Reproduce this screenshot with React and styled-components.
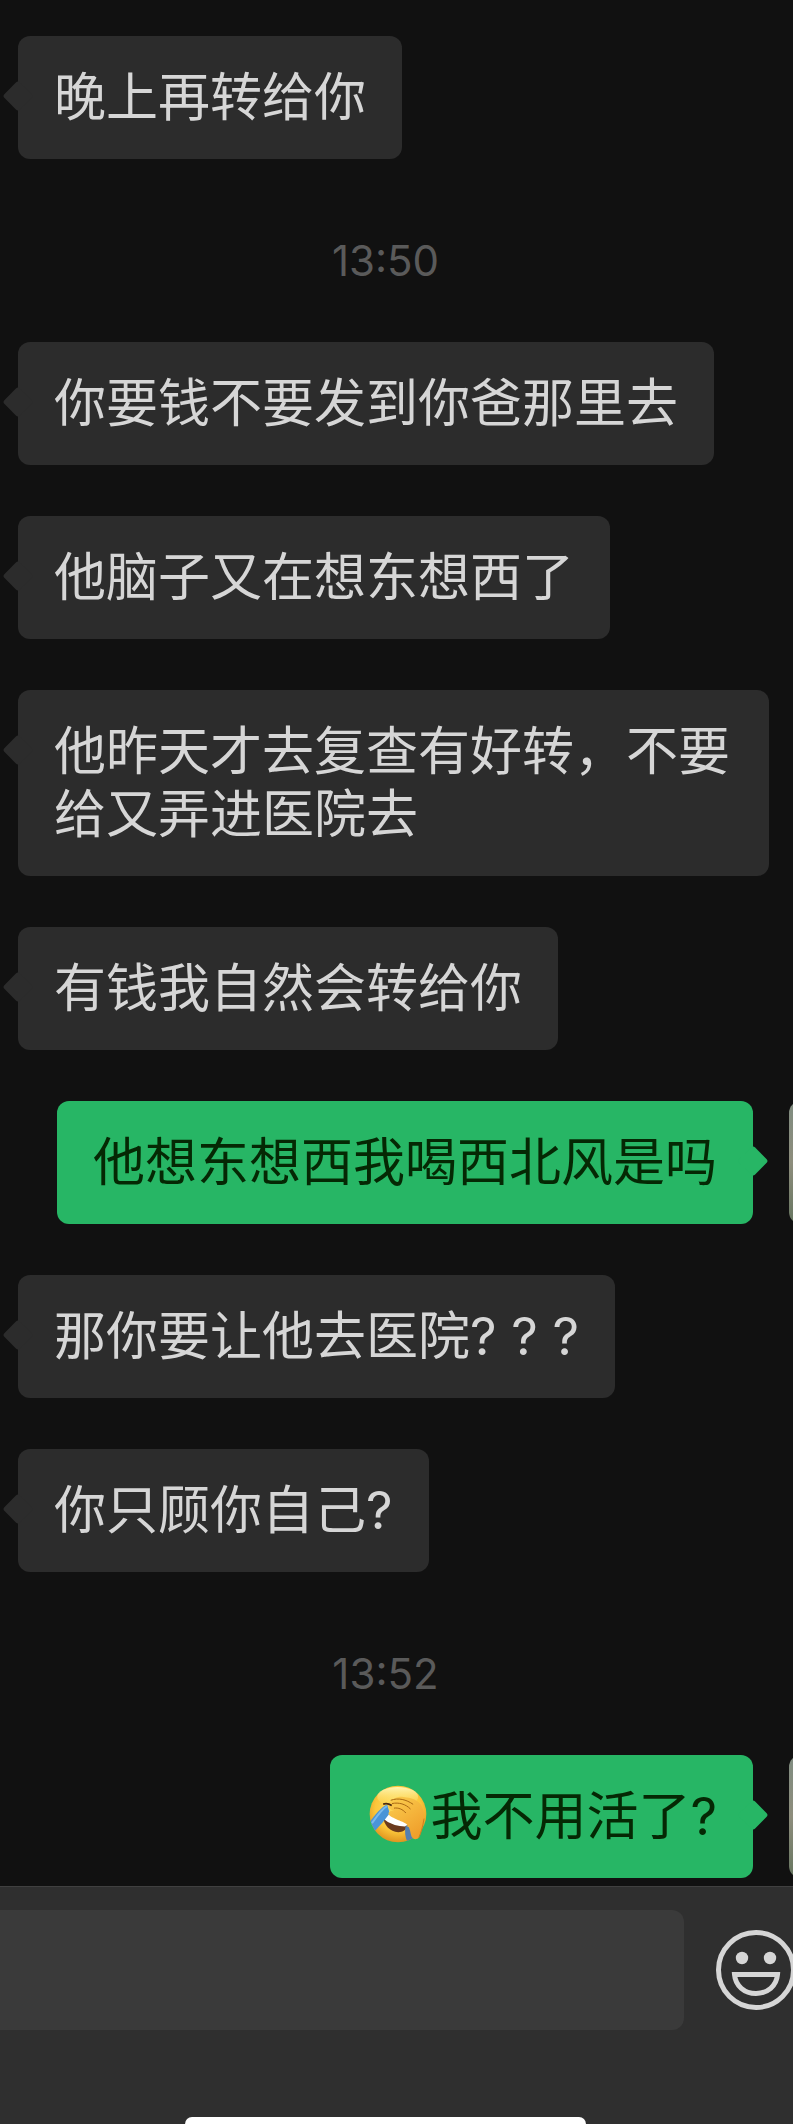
import styled, { createGlobalStyle } from "styled-components";

const messages = [
  { id: 1, text: "晚上再转给你" },
  { id: 2, time: "13:50" },
  { id: 3, text: "你要钱不要发到你爸那里去" },
  { id: 4, text: "他脑子又在想东想西了" },
  { id: 5, text: "他昨天才去复查有好转，不要给又弄进医院去" },
  { id: 6, text: "有钱我自然会转给你" },
  { id: 7, mine: true, text: "他想东想西我喝西北风是吗" },
  { id: 8, text: "那你要让他去医院? ? ?" },
  { id: 9, text: "你只顾你自己?" },
  { id: 10, time: "13:52" },
  { id: 11, mine: true, emoji: true, text: "我不用活了?" },
];

export default function App() {
  return (
    <Page>
      <GlobalStyle />
      <MessageList>
        {messages.map((message) =>
          message.time ? (
            <Time key={message.id}>{message.time}</Time>
          ) : (
            <Row key={message.id} $mine={message.mine}>
              <Bubble $mine={message.mine}>
                {message.emoji && <FacepalmEmoji />}
                {message.text}
              </Bubble>
              {message.mine && <Avatar />}
            </Row>
          )
        )}
      </MessageList>
      <Footer>
        <InputBar>
          <MessageInput type="text" aria-label="消息" />
          <EmojiButton type="button" aria-label="表情">
            <SmileIcon />
          </EmojiButton>
        </InputBar>
        <HomeIndicator />
      </Footer>
    </Page>
  );
}

function SmileIcon() {
  return (
    <Smile viewBox="0 0 80 80" fill="none">
      <circle cx="40" cy="40" r="37.5" stroke="#d6d6d6" strokeWidth="5" />
      <circle cx="26" cy="28" r="6.2" fill="#d6d6d6" />
      <circle cx="54" cy="28" r="6.2" fill="#d6d6d6" />
      <path
        d="M18.5 44.5H61.5C60.5 56 51.5 63.5 40 63.5C28.5 63.5 19.5 56 18.5 44.5Z"
        stroke="#d6d6d6"
        strokeWidth="5"
      />
    </Smile>
  );
}

function FacepalmEmoji() {
  return (
    <Emoji viewBox="25 22 176 176" role="img" aria-label="捂脸">
      <defs>
        <radialGradient id="face" cx="0.5" cy="0.4" r="0.62">
          <stop offset="0" stopColor="#ffe268" />
          <stop offset="0.65" stopColor="#fbc63b" />
          <stop offset="1" stopColor="#dd8f1c" />
        </radialGradient>
        <linearGradient id="shine" x1="0" y1="0" x2="0" y2="1">
          <stop offset="0" stopColor="#fff6b4" />
          <stop offset="1" stopColor="#ffe268" stopOpacity="0" />
        </linearGradient>
        <linearGradient id="hand" x1="0" y1="0" x2="0.6" y2="1">
          <stop offset="0" stopColor="#fbcf50" />
          <stop offset="1" stopColor="#f0a02c" />
        </linearGradient>
        <clipPath id="round">
          <circle cx="113" cy="110" r="86" />
        </clipPath>
      </defs>
      <circle cx="113" cy="110" r="86" fill="url(#face)" />
      <ellipse cx="112" cy="58" rx="62" ry="30" fill="url(#shine)" />
      <g clipPath="url(#round)">
        <path d="M67 116C70 144 88 164 114 165C128 165 138 158 142 144L84 104Z" fill="#6b3a1d" />
        <path d="M67 114C68 122 70 126 76 130C92 142 114 148 134 148L144 142L84 100Z" fill="#fff" />
        <path d="M80 82C64 86 44 112 26 136L42 162C58 146 72 130 88 108Z" fill="#4a94d8" />
        <path d="M80 86C64 94 48 118 34 138" stroke="#7bb9ec" strokeWidth="6" fill="none" />
        <path d="M136 146L158 154L162 196L142 196C134 180 133 162 136 146Z" fill="#537fb0" />
      </g>
      <path
        d="M84 80C96 62 116 54 138 60C160 62 180 72 186 88C194 104 194 122 190 138C186 156 182 170 176 182C168 190 158 186 154 178C150 166 150 154 142 144C134 134 120 132 108 126C96 120 84 116 84 108C86 100 94 98 102 102C88 96 80 88 84 80Z"
        fill="url(#hand)"
      />
      <path
        d="M92 68C114 60 138 66 158 80M96 78C116 74 136 80 150 94M102 92C114 90 128 96 136 106"
        stroke="#a86612"
        strokeWidth="3"
        strokeLinecap="round"
        fill="none"
      />
      <path d="M68 80C78 77 86 79 94 84" stroke="#4c2a10" strokeWidth="5" fill="none" />
      <path d="M192 124C188 148 184 164 176 182" stroke="#cf7d1c" strokeWidth="3" fill="none" />
    </Emoji>
  );
}

const GlobalStyle = createGlobalStyle`
  body {
    margin: 0;
    background: #111111;
    font-family: Inter, "Noto Sans CJK SC", sans-serif;
  }
  * {
    box-sizing: border-box;
  }
`;

const Page = styled.div`
  display: flex;
  flex-direction: column;
  min-height: 100vh;
  overflow: hidden;
`;
const MessageList = styled.main`
  flex: 1;
  display: flex;
  flex-direction: column;
  gap: 51px;
  padding: 36px 0 8px;
`;
const Time = styled.time`
  padding: 21px 22px 0 0;
  font-size: 42px;
  line-height: 60px;
  text-align: center;
  color: #5a5a5a;
`;
const Row = styled.div`
  display: flex;
  justify-content: ${(props) => (props.$mine ? "flex-end" : "flex-start")};
  gap: 36px;
  padding: ${(props) => (props.$mine ? "0" : "0 24px 0 18px")};
`;
const Bubble = styled.div`
  position: relative;
  padding: 30px 36px;
  border-radius: 12px;
  font-size: 52px;
  line-height: 63px;
  color: ${(props) => (props.$mine ? "#052804" : "#d6d6d6")};
  background: ${(props) => (props.$mine ? "#27b665" : "#2c2c2c")};
  &::before {
    content: "";
    position: absolute;
    top: 49px;
    ${(props) => (props.$mine ? "right: -11px;" : "left: -11px;")}
    width: 22px;
    height: 22px;
    border-radius: 3px;
    background: inherit;
    transform: rotate(45deg);
  }
`;
const Emoji = styled.svg`
  width: 58px;
  height: 58px;
  margin: 0 3px;
  vertical-align: top;
`;
const Smile = styled.svg`
  display: block;
  width: 80px;
  height: 80px;
`;
/* most of the avatar runs past the right edge */
const Avatar = styled.div`
  flex: none;
  width: 123px;
  height: 123px;
  margin-right: -119px;
  border-radius: 12px;
  background: linear-gradient(#7f8c80, #8d8d7c 50%, #66755f);
`;
const Footer = styled.footer`
  display: flex;
  flex-direction: column;
  gap: 87px;
  padding-top: 23px;
  border-top: 1px solid #404040;
  background: #2f2f2f;
`;
const InputBar = styled.div`
  display: flex;
  align-items: center;
  gap: 32px;
`;
const MessageInput = styled.input`
  flex: 1;
  min-width: 0;
  height: 120px;
  padding: 0 36px;
  border: none;
  border-radius: 0 12px 12px 0;
  outline: none;
  font-family: inherit;
  font-size: 52px;
  color: #d6d6d6;
  background: #3a3a3a;
`;
const EmojiButton = styled.button`
  flex: none;
  margin-right: -3px;
  padding: 0;
  border: none;
  background: none;
  cursor: pointer;
`;
const HomeIndicator = styled.div`
  align-self: center;
  width: 401px;
  height: 7px;
  margin-right: 22px;
  border-radius: 7px 7px 0 0;
  background: #ffffff;
`;
